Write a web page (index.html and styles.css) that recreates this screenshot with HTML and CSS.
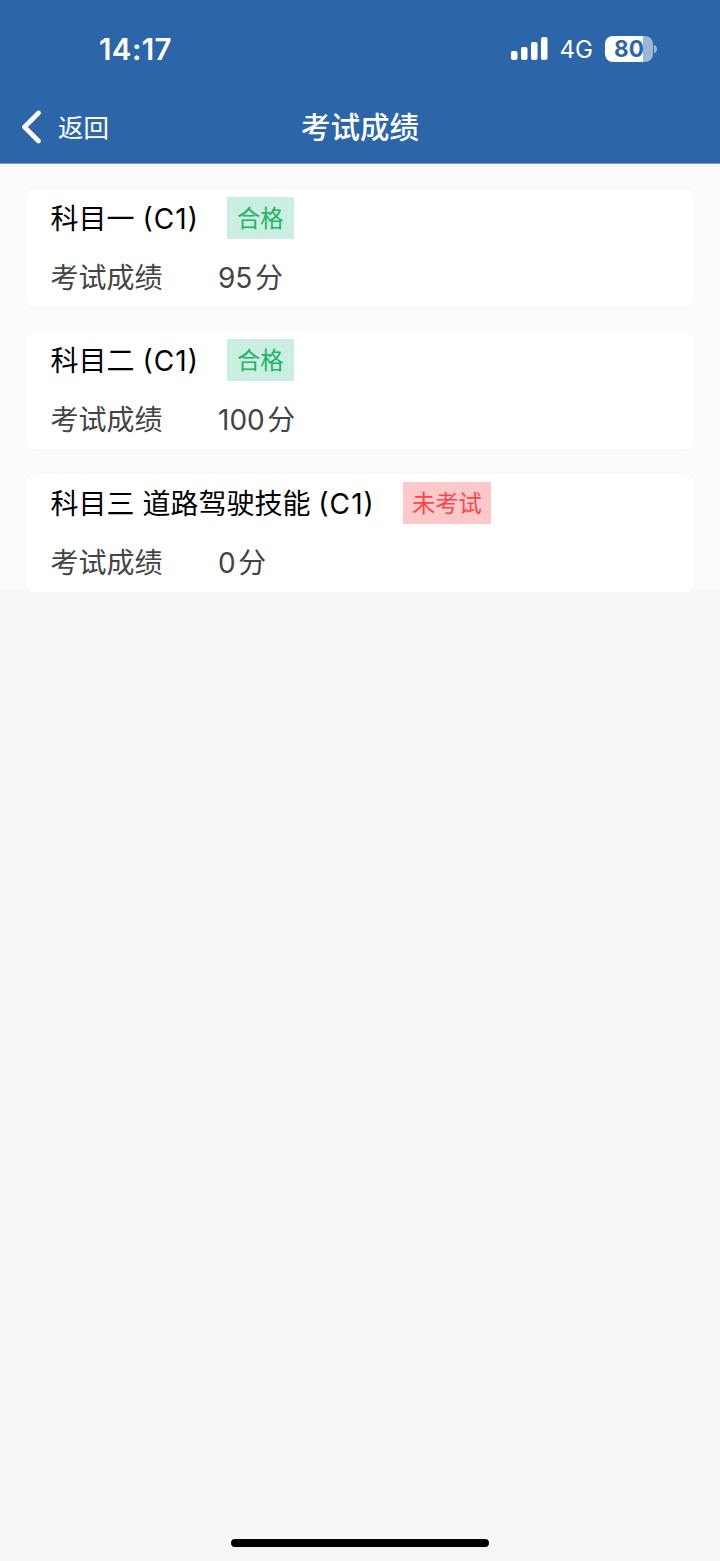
FILE: index.html
```html
<!DOCTYPE html>
<html lang="zh-CN">
<head>
    <meta charset="UTF-8">
    <meta name="viewport" content="width=device-width, initial-scale=1.0">
    <title>考试成绩</title>
    <link rel="stylesheet" href="styles.css">
</head>
<body>
    <header class="header">
        <div class="status-bar">
            <span class="time">14:17</span>
            <div class="status-icons">
                <svg class="signal" width="38" height="24" viewBox="0 0 38 24" fill="#fff">
                    <rect x="0" y="14" width="6.5" height="9" rx="2"/>
                    <rect x="10" y="10" width="6.5" height="13" rx="2"/>
                    <rect x="20" y="5" width="6.5" height="18" rx="2"/>
                    <rect x="30" y="0" width="6.5" height="23" rx="2"/>
                </svg>
                <span class="network">4G</span>
                <div class="battery"><span>80</span></div>
                <svg class="battery-cap" width="4" height="8" viewBox="0 0 4 8">
                    <path d="M0 0C4 1 4 7 0 8Z" fill="#9bb6d8"/>
                </svg>
            </div>
        </div>
        <nav class="nav-bar">
            <a class="back">
                <svg width="21" height="34" viewBox="0 0 21 34" fill="none">
                    <path d="M18.5 3L4.5 17L18.5 31" stroke="#fff" stroke-width="4.6" stroke-linecap="round" stroke-linejoin="round"/>
                </svg>
                <span>返回</span>
            </a>
            <h1 class="title">考试成绩</h1>
        </nav>
    </header>

    <main class="list">
        <section class="card">
            <div class="subject">
                <span class="name">科目一 <span class="level">(C1)</span></span>
                <span class="tag pass">合格</span>
            </div>
            <div class="score">
                <span class="label">考试成绩</span>
                <span>95<span class="unit">分</span></span>
            </div>
        </section>
        <section class="card">
            <div class="subject">
                <span class="name">科目二 <span class="level">(C1)</span></span>
                <span class="tag pass">合格</span>
            </div>
            <div class="score">
                <span class="label">考试成绩</span>
                <span>100<span class="unit">分</span></span>
            </div>
        </section>
        <section class="card">
            <div class="subject">
                <span class="name">科目三 道路驾驶技能 <span class="level">(C1)</span></span>
                <span class="tag fail">未考试</span>
            </div>
            <div class="score">
                <span class="label">考试成绩</span>
                <span>0<span class="unit">分</span></span>
            </div>
        </section>
    </main>

    <div class="home-indicator"></div>
</body>
</html>
```
FILE: styles.css
```css
* {
    box-sizing: border-box;
}
body {
    margin: 0;
    min-height: 1561px;
    display: flex;
    flex-direction: column;
    background-color: #f7f7f7;
    font-family: Inter, "Noto Sans CJK SC", sans-serif;
    color: #000;
}
.header {
    height: 164px;
    background-color: #2c66a9;
    border-bottom: 1px solid #6f97c5;
    color: #fff;
}
.status-bar {
    height: 90px;
    padding: 8px 62px 0 99px;
    display: flex;
    align-items: center;
    justify-content: space-between;
}
.time {
    font-size: 29.5px;
    font-weight: 600;
    line-height: 32px;
    letter-spacing: 0.4px;
}
.status-icons {
    display: flex;
    align-items: center;
}
.network {
    margin: 2px 12px 0 10.5px;
    font-size: 24px;
    line-height: 30px;
}
.battery {
    width: 48px;
    height: 26px;
    border-radius: 8px;
    background: linear-gradient(to right, #fff 38px, #9bb6d8 38px);
    color: #2c66a9;
    font-size: 22.5px;
    font-weight: 700;
    line-height: 26px;
    text-align: center;
}
.battery-cap {
    margin-left: 1px;
}
.nav-bar {
    height: 73px;
    padding: 0 20px;
    display: grid;
    grid-template-columns: 1fr auto 1fr;
    align-items: center;
}
.back {
    display: flex;
    align-items: center;
    gap: 17px;
    font-size: 25.5px;
    line-height: 38px;
}
.back span {
    padding-top: 2px;
}
.title {
    margin: 0;
    font-size: 29.5px;
    font-weight: 500;
    line-height: 42px;
}
.list {
    height: 425px;
    padding: 25px 25px 0;
    display: flex;
    flex-direction: column;
    gap: 25px;
    background-color: #fbfbfb;
}
.card {
    flex: none;
    height: 117.5px;
    padding: 7.5px 25.5px 0;
    border-radius: 10px;
    background-color: #fff;
    box-shadow: 0 0 3px rgba(0, 0, 0, 0.03);
    font-size: 28px;
}
.subject {
    height: 42px;
    display: flex;
    align-items: center;
    gap: 28px;
    line-height: 42px;
}
.name {
    padding-top: 2px;
}
.level {
    letter-spacing: 1.1px;
    font-feature-settings: "case";
}
.tag {
    height: 42px;
    padding: 1px 10px 0;
    font-size: 23.3px;
    line-height: 42px;
}
.pass {
    background-color: #caeee0;
    color: #22b366;
}
.fail {
    padding: 1px 9px 0;
    background-color: #fdc8ca;
    color: #f5484a;
}
.score {
    height: 42px;
    margin-top: 16px;
    display: flex;
    align-items: center;
    color: #444;
}
.label {
    width: 167.5px;
}
.unit {
    margin-left: 2.5px;
}
.home-indicator {
    width: 258px;
    height: 8px;
    margin: auto auto 14px;
    border-radius: 4px;
    background-color: #000;
}
```
